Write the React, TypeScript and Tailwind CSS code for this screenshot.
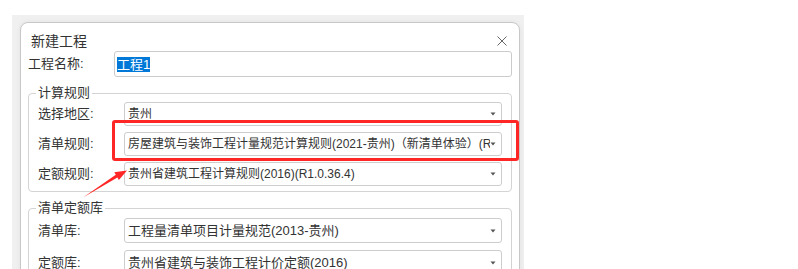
import React from "react";

function Caret() {
  return (
    <svg width="6" height="4" viewBox="0 0 6 4" className="shrink-0">
      <path d="M0.5 0.5 L5.5 0.5 L3 3.5 Z" fill="#555" />
    </svg>
  );
}

function Select({ value, small }: { value: string; small?: boolean }) {
  return (
    <div className="flex h-full w-[378px] items-center border border-[#cdcdcd] rounded-[3px] bg-white pl-[3px] pr-[5px]">
      <span
        className={
          "min-w-0 flex-1 overflow-hidden whitespace-nowrap text-[#333] " +
          (small ? "text-[12px]" : "text-[13px]")
        }
      >
        {value}
      </span>
      <Caret />
    </div>
  );
}

function Row({
  label,
  value,
  h,
  small,
}: {
  label: string;
  value: string;
  h: string;
  small?: boolean;
}) {
  return (
    <div className={"flex items-center " + h}>
      <span className="w-[86px] shrink-0 text-[13px] text-[#333]">{label}</span>
      <Select value={value} small={small} />
    </div>
  );
}

export default function App() {
  return (
    <div className="relative h-[269px] w-[798px] overflow-hidden bg-white pl-[12px] pt-[15px] font-['Liberation_Sans','Noto_Sans_CJK_SC',sans-serif] text-[13px] text-[#333]">
      <div className="h-[254px] w-[512px] bg-[#f0f0f0] pl-[8px] pr-[4px] pt-[7px]">
        <div className="h-[300px] w-[500px] rounded-t-[8px] border border-[#c8c8c8] bg-white px-[7px] shadow-[0_0_5px_rgba(0,0,0,0.06)]">
          <div className="mt-[8px] flex h-[20px] items-center justify-between pl-[3px] pr-[5px]">
            <span className="text-[14px] leading-[20px] text-[#333]">新建工程</span>
            <svg width="10" height="10" viewBox="0 0 10 10">
              <path d="M0.5 0.5 L9.5 9.5 M9.5 0.5 L0.5 9.5" stroke="#666" strokeWidth="1" fill="none" />
            </svg>
          </div>
          <div className="flex h-[26px] items-center">
            <span className="w-[86px] shrink-0 text-[13px]">工程名称:</span>
            <div className="flex h-[26px] w-[398px] items-center rounded-[3px] border border-[#cbcbcb] bg-white pl-[2px]">
              <span className="bg-[#0078d7] text-[13px] leading-[15px] text-white">工程1</span>
            </div>
          </div>

          <fieldset className="mt-[7px] rounded-[4px] border border-[#d4d4d4] px-[9px] pb-[5px]">
            <legend className="-ml-[2px] px-[2px] text-[13px] leading-[18px] text-[#333]">计算规则</legend>
            <div className="flex flex-col gap-[6px]">
              <Row label="选择地区:" value="贵州" h="h-[24px]" small />
              <Row
                label="清单规则:"
                value="房屋建筑与装饰工程计量规范计算规则(2021-贵州)（新清单体验）(R1.0.36.4)"
                h="h-[24px]"
                small
              />
              <Row label="定额规则:" value="贵州省建筑工程计算规则(2016)(R1.0.36.4)" h="h-[24px]" small />
            </div>
          </fieldset>

          <fieldset className="mt-[7px] rounded-[4px] border border-[#d4d4d4] px-[9px] pb-[5px] pt-[1px]">
            <legend className="-ml-[2px] px-[2px] text-[13px] leading-[18px] text-[#333]">清单定额库</legend>
            <div className="flex flex-col gap-[7px]">
              <Row label="清单库:" value="工程量清单项目计量规范(2013-贵州)" h="h-[25px]" />
              <Row label="定额库:" value="贵州省建筑与装饰工程计价定额(2016)" h="h-[25px]" />
            </div>
          </fieldset>
        </div>
      </div>

      <div className="pointer-events-none absolute left-[112px] top-[120px] h-[41px] w-[407px] rounded-[3px] border-[3px] border-[#ff2626]" />
      <svg
        className="pointer-events-none absolute left-0 top-0"
        width="798"
        height="269"
        viewBox="0 0 798 269"
      >
        <polygon
          points="83,197.5 115.8,174.8 114.3,172.2 127,170.5 118.9,180 117.4,177.4"
          fill="#ff2626"
        />
      </svg>
    </div>
  );
}
